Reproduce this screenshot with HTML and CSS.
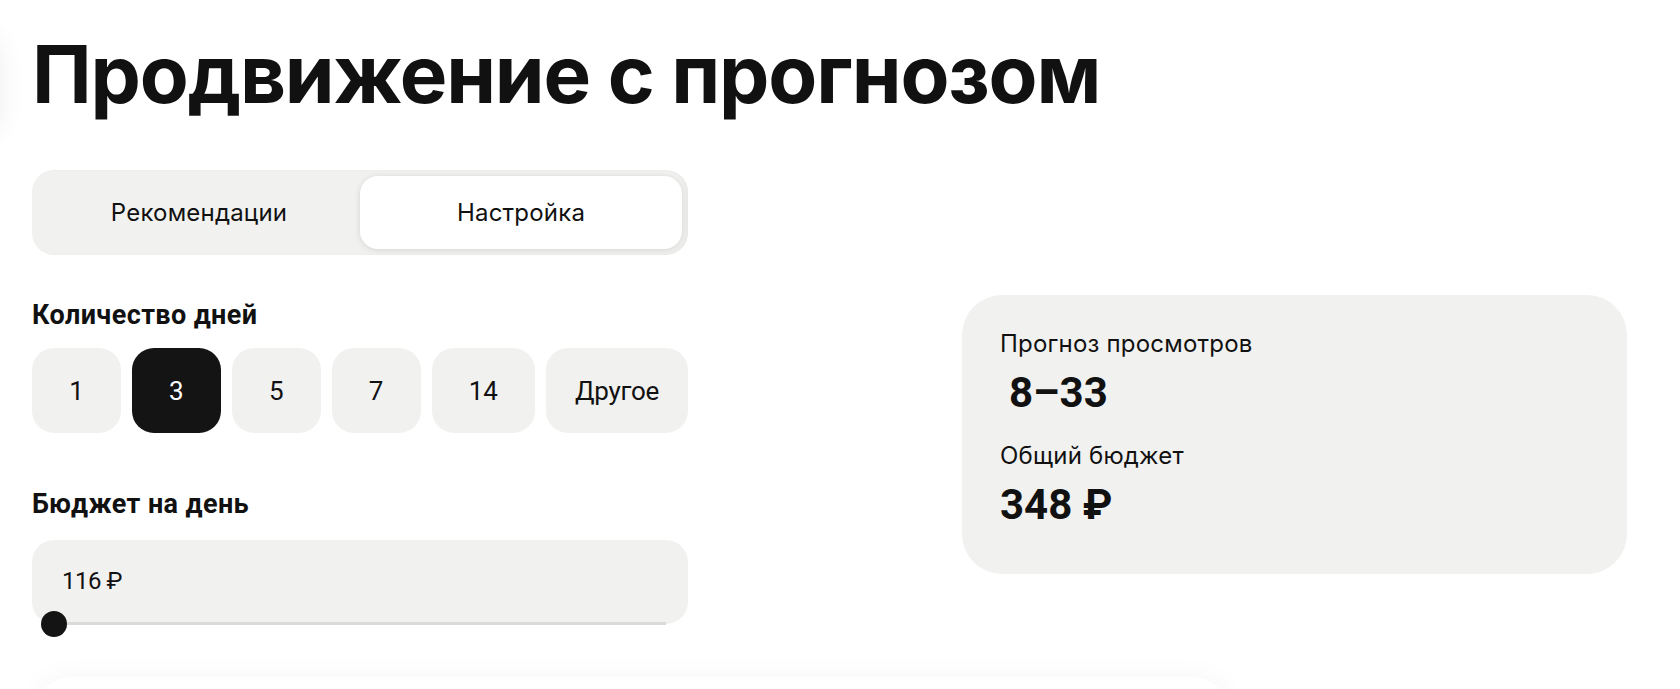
FILE: index.html
```html
<!DOCTYPE html>
<html lang="ru">
<head>
  <meta charset="UTF-8">
  <meta name="viewport" content="width=device-width, initial-scale=1.0">
  <title>Продвижение с прогнозом</title>
  <link rel="stylesheet" href="styles.css">
</head>
<body>
  <div class="side-shadow"></div>

  <main class="page">
    <h1 class="title">Продвижение с прогнозом</h1>

    <div class="layout">
      <!-- Настройки -->
      <div class="settings">
        <div class="tabs">
          <button class="tab">Рекомендации</button>
          <button class="tab tab-active">Настройка</button>
        </div>

        <h3 class="field-label label-days">Количество дней</h3>
        <div class="days">
          <button class="day">1</button>
          <button class="day day-active">3</button>
          <button class="day">5</button>
          <button class="day">7</button>
          <button class="day">14</button>
          <button class="day day-other">Другое</button>
        </div>

        <h3 class="field-label label-budget">Бюджет на день</h3>
        <div class="budget">
          <div class="budget-value">116 ₽</div>
          <div class="slider-track"></div>
          <div class="slider-knob"></div>
        </div>
      </div>

      <!-- Прогноз -->
      <aside class="forecast">
        <p class="forecast-label">Прогноз просмотров</p>
        <p class="forecast-value forecast-views">8–33</p>
        <p class="forecast-label forecast-gap">Общий бюджет</p>
        <p class="forecast-value">348 ₽</p>
      </aside>
    </div>

    <section class="next-card"></section>
  </main>
</body>
</html>
```

FILE: styles.css
```css
/* Основные стили */
body {
  margin: 0;
  font-family: "Inter", "Noto Sans", sans-serif;
  color: #111;
  background: #fff;
  overflow: hidden;
}

.side-shadow {
  position: absolute;
  left: -60px;
  top: 30px;
  width: 60px;
  height: 110px;
  border-radius: 30px;
  box-shadow: 0 0 28px rgba(0, 0, 0, 0.07);
}

.page {
  padding: 34px 53px 0 32px;
}

.title {
  margin: 0;
  font-size: 80px;
  line-height: 80px;
  font-weight: 700;
  letter-spacing: -1.2px;
}

.layout {
  display: grid;
  grid-template-columns: 656px 665px;
  justify-content: space-between;
  align-items: start;
  margin-top: 56px;
}

/* Вкладки */
.tabs {
  display: flex;
  height: 85px;
  padding: 6px;
  box-sizing: border-box;
  border-radius: 22px;
  background: #f1f1f0;
  box-shadow: inset -2px 0 3px rgba(0, 0, 0, 0.04);
}

.tab {
  flex: 1;
  border: none;
  border-radius: 18px;
  background: transparent;
  font-family: "Inter", sans-serif;
  font-size: 24px;
  letter-spacing: 0.2px;
  color: #111;
  cursor: pointer;
}

.tab-active {
  background: #fff;
  box-shadow: 0 1px 6px rgba(0, 0, 0, 0.12);
}

/* Количество дней */
.field-label {
  margin: 0;
  font-family: "Roboto", sans-serif;
  font-size: 27px;
  line-height: 30px;
  font-weight: 700;
  letter-spacing: 0.4px;
}

.label-days {
  margin-top: 45px;
}

.days {
  display: flex;
  gap: 11px;
  margin-top: 18px;
}

.day {
  flex: 1 1 auto;
  min-width: 0;
  height: 85px;
  padding: 0 36px;
  border: none;
  border-radius: 22px;
  background: #f1f1f0;
  font-family: "Roboto", sans-serif;
  font-size: 26px;
  color: #111;
  cursor: pointer;
}

.day-active {
  background: #141414;
  color: #fff;
}

.day-other {
  padding: 0 28px;
  letter-spacing: -0.3px;
}

/* Бюджет */
.label-budget {
  margin-top: 56px;
}

.budget {
  position: relative;
  height: 84px;
  margin-top: 21px;
  padding: 27px 30px 0;
  box-sizing: border-box;
  border-radius: 22px;
  background: #f1f1f0;
}

.budget-value {
  font-family: "Roboto", sans-serif;
  font-size: 24px;
  line-height: 28px;
  letter-spacing: -0.5px;
}

.slider-track {
  position: absolute;
  left: 16px;
  right: 22px;
  bottom: -1px;
  height: 3px;
  background: #dadada;
}

.slider-knob {
  position: absolute;
  left: 9px;
  top: 71px;
  width: 26px;
  height: 26px;
  border-radius: 50%;
  background: #141414;
}

/* Прогноз */
.forecast {
  margin-top: 125px;
  padding: 34px 38px 45px;
  border-radius: 40px;
  background: #f1f1f0;
}

.forecast p {
  margin: 0;
}

.forecast-label {
  font-size: 24px;
  line-height: 30px;
  letter-spacing: 0.2px;
}

.forecast-value {
  margin-top: 10px !important;
  font-family: "Roboto", sans-serif;
  font-size: 42px;
  line-height: 48px;
  font-weight: 700;
}

.forecast-views {
  padding-left: 9px;
}

.forecast-gap {
  margin-top: 24px !important;
}

.next-card {
  width: 1200px;
  height: 200px;
  margin-top: 53px;
  border-radius: 40px;
  background: #fff;
  box-shadow: 0 -4px 24px rgba(0, 0, 0, 0.03);
}
```
